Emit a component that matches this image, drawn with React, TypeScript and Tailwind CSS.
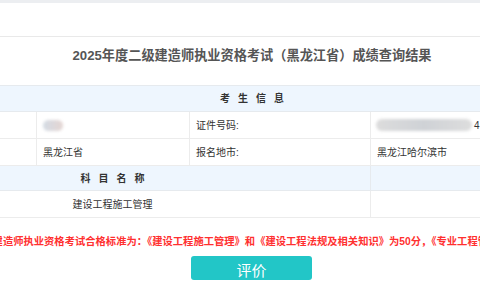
import React from "react";

const font = { fontFamily: '"Liberation Sans", "Noto Sans CJK SC", sans-serif' };

const Blur = ({ className }: { className: string }) => (
	<span className={`inline-block rounded-full blur-[1.5px] ${className}`} />
);

export default function App() {
	return (
		<div
			className="w-[480px] h-[300px] overflow-hidden bg-white text-[#333]"
			style={font}
		>
			<div className="h-[3px] bg-[#eceef1]" />
			<div className="h-[34px] border-b border-[#e9e9e9]" />

			<div className="-ml-[145px] w-[794px]">
				<div className="h-[48px] pt-[9px] text-center text-[13.2px] leading-[20px] font-bold text-[#555]">
					2025年度二级建造师执业资格考试（黑龙江省）成绩查询结果
				</div>

				<div className="text-[10px]">
					<div className="h-[27px] flex items-center justify-center bg-[#eef6fe] border-y border-[#e6eaee] font-bold tracking-[8px] pl-[8px]">
						考生信息
					</div>

					<div className="grid grid-cols-[182px_153px_181px_278px] h-[27px] border-b border-[#ececec]">
						<div className="border-r border-[#ececec]" />
						<div className="border-r border-[#ececec] flex items-center pl-[6px]">
							<Blur className="w-[20px] h-[11px] bg-linear-to-r from-[#d3dbe4] to-[#e4d5d2]" />
						</div>
						<div className="border-r border-[#ececec] flex items-center pl-[6px]">
							证件号码:
						</div>
						<div className="flex items-center pl-[5px]">
							<Blur className="w-[96px] h-[12px] bg-linear-to-r from-[#dcdcdc] via-[#cfd2d6] to-[#dddddd]" />
							<span className="ml-[2px]">4</span>
						</div>
					</div>

					<div className="grid grid-cols-[182px_153px_181px_278px] h-[27px] border-b border-[#ececec]">
						<div className="border-r border-[#ececec]" />
						<div className="border-r border-[#ececec] flex items-center pl-[6px]">
							黑龙江省
						</div>
						<div className="border-r border-[#ececec] flex items-center pl-[6px]">
							报名地市:
						</div>
						<div className="flex items-center pl-[6px]">黑龙江哈尔滨市</div>
					</div>

					<div className="grid grid-cols-[516px_278px] h-[25px] bg-[#eef6fe] border-b border-[#e6eaee] font-bold">
						<div className="border-r border-[#e6eaee] flex items-center justify-center tracking-[8px] pl-[8px]">
							科目名称
						</div>
						<div />
					</div>

					<div className="grid grid-cols-[516px_278px] h-[27px] border-b border-[#ececec]">
						<div className="border-r border-[#ececec] flex items-center justify-center">
							建设工程施工管理
						</div>
						<div />
					</div>
				</div>

				<div className="mt-[17px] pl-[117px] whitespace-nowrap text-[10.3px] leading-[14px] font-bold text-[#ff3030]">
					二级建造师执业资格考试合格标准为：《建设工程施工管理》和《建设工程法规及相关知识》为50分，《专业工程管理与实务》为72分。
				</div>
			</div>

			<div className="mt-[7px] ml-[191px] w-[121px] h-[24px] rounded-[3px] bg-[#22c6c7] flex items-end justify-center text-white text-[15px] leading-[17px] pb-[1px]">
				评价
			</div>
		</div>
	);
}
